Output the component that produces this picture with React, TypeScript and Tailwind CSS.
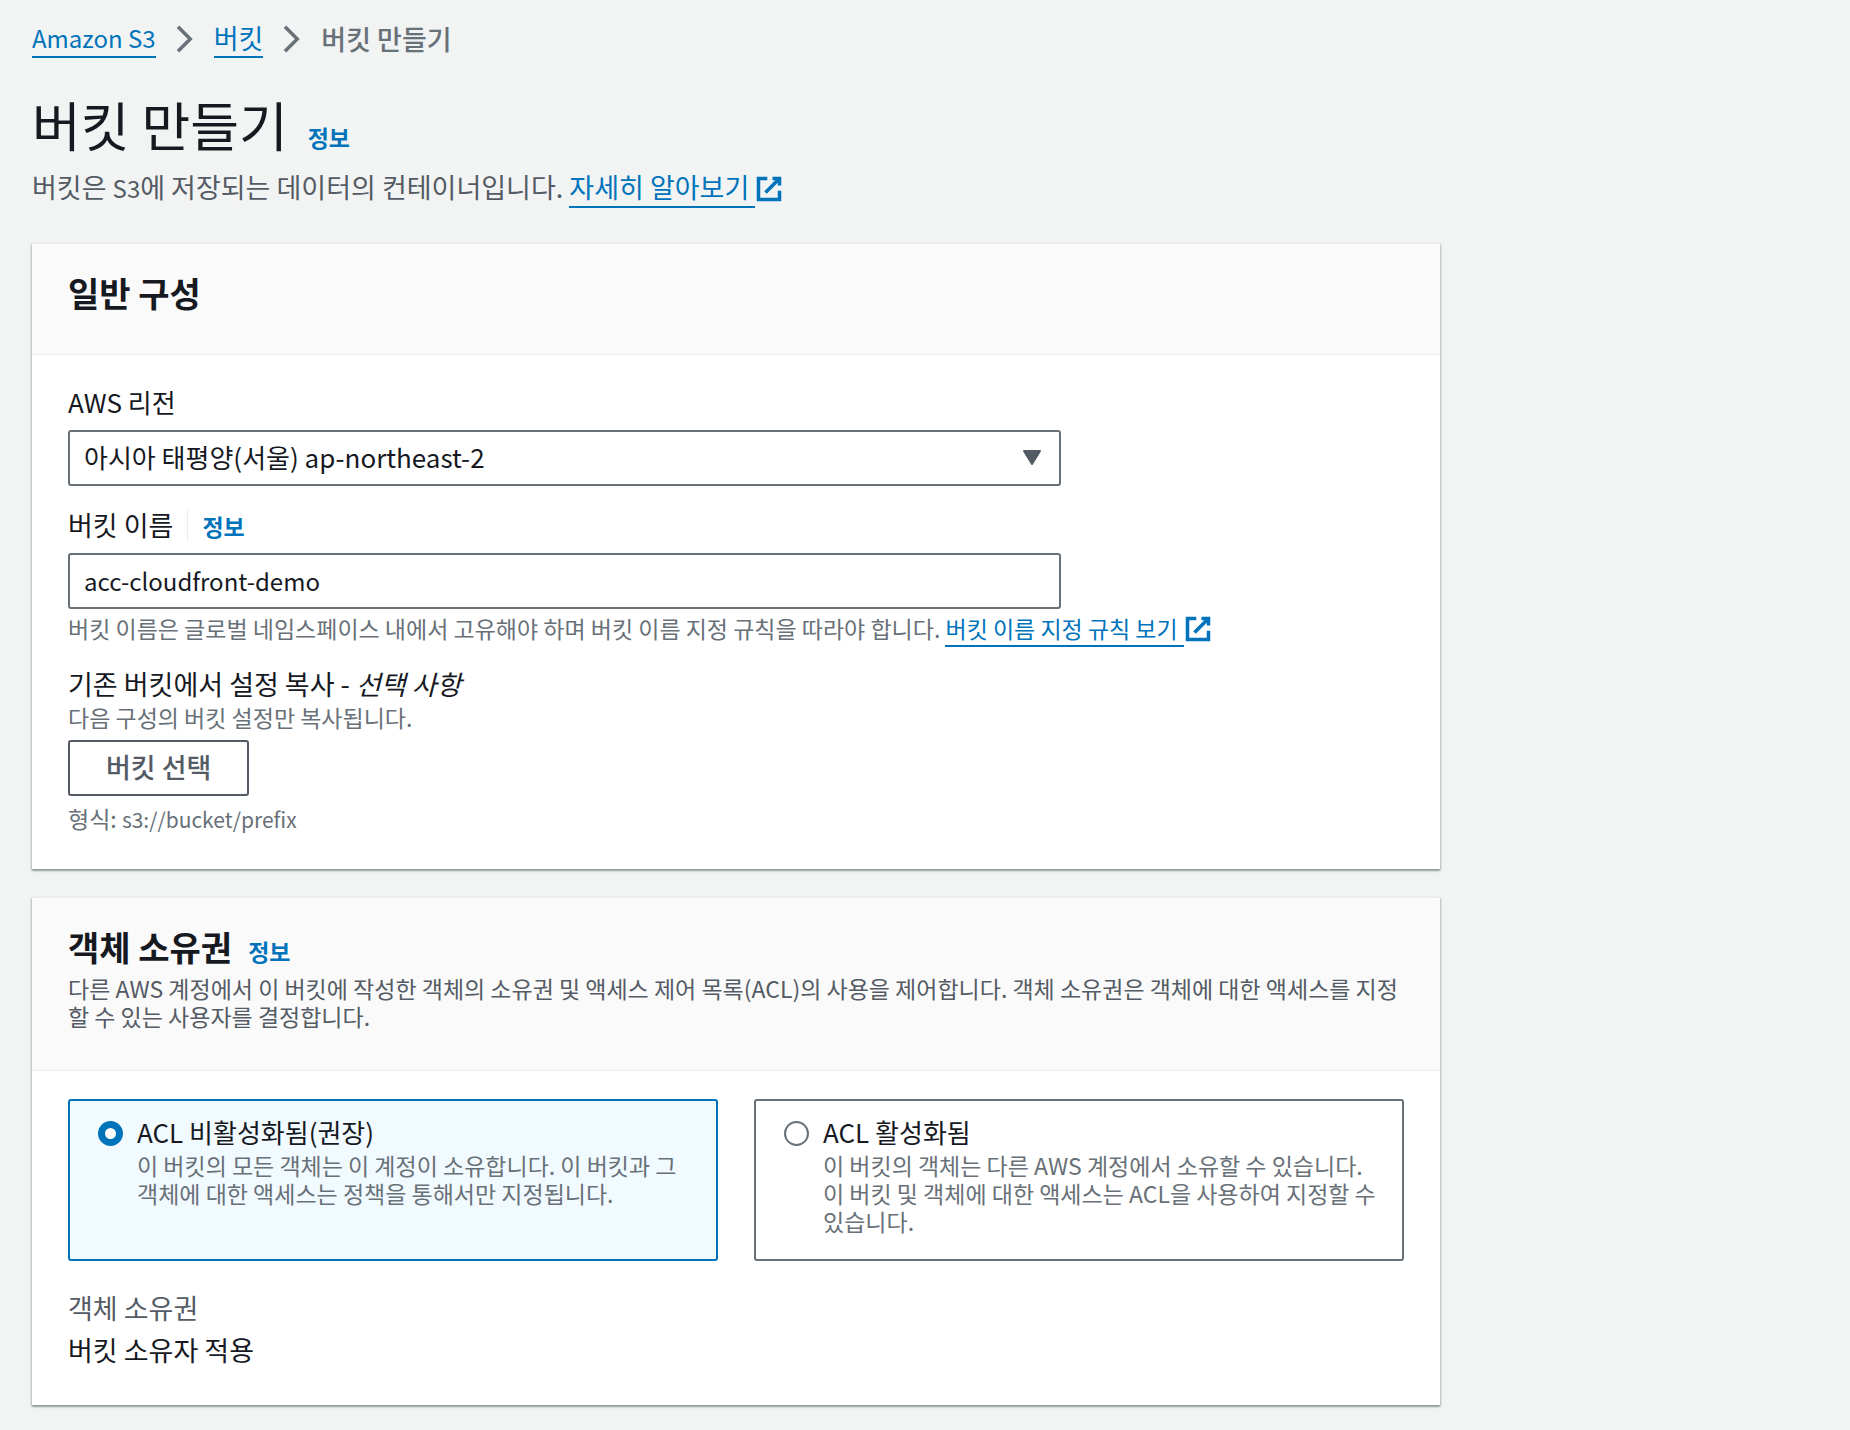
import React from "react";

const ExternalIcon = () => (
  <svg
    viewBox="0 0 16 16"
    className="inline-block size-7 align-[-5px]"
    fill="none"
    stroke="currentColor"
    strokeWidth="2"
    aria-hidden="true"
  >
    <path d="M10 2h4v4" />
    <path d="M6 10l8-8" />
    <path d="M14 9.05V14H2V2h5" />
  </svg>
);

const ChevronIcon = () => (
  <svg
    viewBox="0 0 16 16"
    className="size-7 text-[#687078]"
    fill="none"
    stroke="currentColor"
    strokeWidth="2"
    aria-hidden="true"
  >
    <path d="M4 1l7 7-7 7" />
  </svg>
);

const InfoLink = () => (
  <a href="#info" className="text-[23px] leading-7 font-bold text-[#0073bb]">
    정보
  </a>
);

const ExternalLink = ({ children }: { children: React.ReactNode }) => (
  <a href="#docs" className="whitespace-nowrap text-[#0073bb]">
    <span className="border-b-2 border-[#0073bb] pr-[6px]">{children}</span>
    <ExternalIcon />
  </a>
);

const Card = ({
  header,
  children,
}: {
  header: React.ReactNode;
  children: React.ReactNode;
}) => (
  <section className="border-t border-[#eaeded] bg-white shadow-[0_2px_2px_0_rgba(0,28,36,0.3),1px_1px_2px_0_rgba(0,28,36,0.15),-1px_1px_2px_0_rgba(0,28,36,0.15)]">
    <div className="border-b border-[#eaeded] bg-[#fafafa] px-9 pt-7 pb-10">
      {header}
    </div>
    <div className="px-9 pt-7 pb-9">{children}</div>
  </section>
);

const tiles = [
  {
    id: "acl-disabled",
    title: "ACL 비활성화됨(권장)",
    text: "이 버킷의 모든 객체는 이 계정이 소유합니다. 이 버킷과 그 객체에 대한 액세스는 정책을 통해서만 지정됩니다.",
  },
  {
    id: "acl-enabled",
    title: "ACL 활성화됨",
    text: "이 버킷의 객체는 다른 AWS 계정에서 소유할 수 있습니다. 이 버킷 및 객체에 대한 액세스는 ACL을 사용하여 지정할 수 있습니다.",
  },
];

const App = () => {
  const [acl, setAcl] = React.useState("acl-disabled");

  return (
    <div className="min-h-screen bg-[#f2f3f3] font-['Noto_Sans_CJK_KR',sans-serif] text-[27px] leading-[38px] text-[#16191f]">
      <main className="max-w-[1472px] px-8 pt-5 pb-6">
        <nav className="flex items-center gap-[15px] leading-9">
          <a
            href="#s3"
            className="border-b-2 border-[#0073bb] text-[24px] leading-9 text-[#0073bb]"
          >
            Amazon S3
          </a>
          <ChevronIcon />
          <a
            href="#buckets"
            className="border-b-2 border-[#0073bb] text-[#0073bb]"
          >
            버킷
          </a>
          <ChevronIcon />
          <span className="font-medium text-[#687078]">버킷 만들기</span>
        </nav>

        <div className="mt-[34px] mb-9">
          <div className="flex items-baseline gap-5">
            <h1 className="text-[53px] leading-[64px]">버킷 만들기</h1>
            <InfoLink />
          </div>
          <p className="mt-3 text-[#545b64]">
            버킷은 <span className="text-[24px]">S3</span>에 저장되는 데이터의
            컨테이너입니다. <ExternalLink>자세히 알아보기</ExternalLink>
          </p>
        </div>

        <div className="grid gap-7">
          <Card
            header={
              <h2 className="text-[34px] leading-[42px] font-bold">
                일반 구성
              </h2>
            }
          >
            <label htmlFor="region" className="block text-[26px] leading-[38px]">
              AWS 리전
            </label>
            <div className="relative mt-[9px] max-w-[993px]">
              <select
                id="region"
                className="block h-14 w-full appearance-none rounded-[3px] border-2 border-[#687078] bg-white px-[14px] pb-[2px] text-[26px]"
              >
                <option>아시아 태평양(서울) ap-northeast-2</option>
              </select>
              <svg
                viewBox="0 0 18 15"
                className="pointer-events-none absolute top-5 right-5 h-[15px] w-[18px]"
                aria-hidden="true"
              >
                <path
                  d="M1 1h16L9 14z"
                  fill="#545b64"
                  stroke="#545b64"
                  strokeWidth="2"
                  strokeLinejoin="round"
                />
              </svg>
            </div>

            <div className="mt-5 flex items-center">
              <label htmlFor="name">버킷 이름</label>
              <span className="ml-[14px] border-l border-[#eaeded] pl-[14px] leading-8">
                <InfoLink />
              </span>
            </div>
            <input
              id="name"
              type="text"
              defaultValue="acc-cloudfront-demo"
              className="mt-[9px] block h-14 w-full max-w-[993px] rounded-[3px] border-2 border-[#687078] bg-white px-[14px] pb-[2px] text-[24px]"
            />
            <p className="mt-[5px] text-[23px] leading-7 text-[#687078]">
              버킷 이름은 글로벌 네임스페이스 내에서 고유해야 하며 버킷 이름
              지정 규칙을 따라야 합니다.{" "}
              <ExternalLink>버킷 이름 지정 규칙 보기</ExternalLink>
            </p>

            <div className="mt-[22px]">
              기존 버킷에서 설정 복사 - <i>선택 사항</i>
            </div>
            <p className="text-[23px] leading-7 text-[#687078]">
              다음 구성의 버킷 설정만 복사됩니다.
            </p>
            <button
              type="button"
              className="mt-[9px] block h-14 rounded-[3px] border-2 border-[#545b64] bg-white px-9 pb-[2px] font-medium text-[#545b64]"
            >
              버킷 선택
            </button>
            <p className="mt-2 text-[23px] leading-7 text-[#687078]">
              형식: <span className="text-[21px]">s3://bucket/prefix</span>
            </p>
          </Card>

          <Card
            header={
              <>
                <div className="flex items-baseline gap-4">
                  <h2 className="text-[34px] leading-[42px] font-bold">
                    객체 소유권
                  </h2>
                  <InfoLink />
                </div>
                <p className="mt-[6px] text-[23px] leading-7 text-[#545b64]">
                  다른 AWS 계정에서 이 버킷에 작성한 객체의 소유권 및 액세스
                  제어 목록(ACL)의 사용을 제어합니다. 객체 소유권은 객체에 대한
                  액세스를 지정할 수 있는 사용자를 결정합니다.
                </p>
              </>
            }
          >
            <div className="grid grid-cols-2 gap-9">
              {tiles.map((tile) => (
                <label
                  key={tile.id}
                  htmlFor={tile.id}
                  className="flex items-start gap-[14px] rounded-[3px] border-2 border-[#687078] pt-3 pr-6 pb-6 pl-7 has-checked:border-[#0073bb] has-checked:bg-[#f1faff]"
                >
                  <input
                    id={tile.id}
                    type="radio"
                    name="acl"
                    checked={acl === tile.id}
                    onChange={() => setAcl(tile.id)}
                    className="mt-2 size-[25px] shrink-0 appearance-none rounded-full border-2 border-[#687078] bg-white checked:border-[7px] checked:border-[#0073bb]"
                  />
                  <span>
                    <span className="block text-[26px]">{tile.title}</span>
                    <span className="block text-[23px] leading-7 text-[#687078]">
                      {tile.text}
                    </span>
                  </span>
                </label>
              ))}
            </div>
            <dl className="mt-7">
              <dt className="text-[#545b64]">객체 소유권</dt>
              <dd className="mt-1">버킷 소유자 적용</dd>
            </dl>
          </Card>
        </div>
      </main>
    </div>
  );
};

export default App;
